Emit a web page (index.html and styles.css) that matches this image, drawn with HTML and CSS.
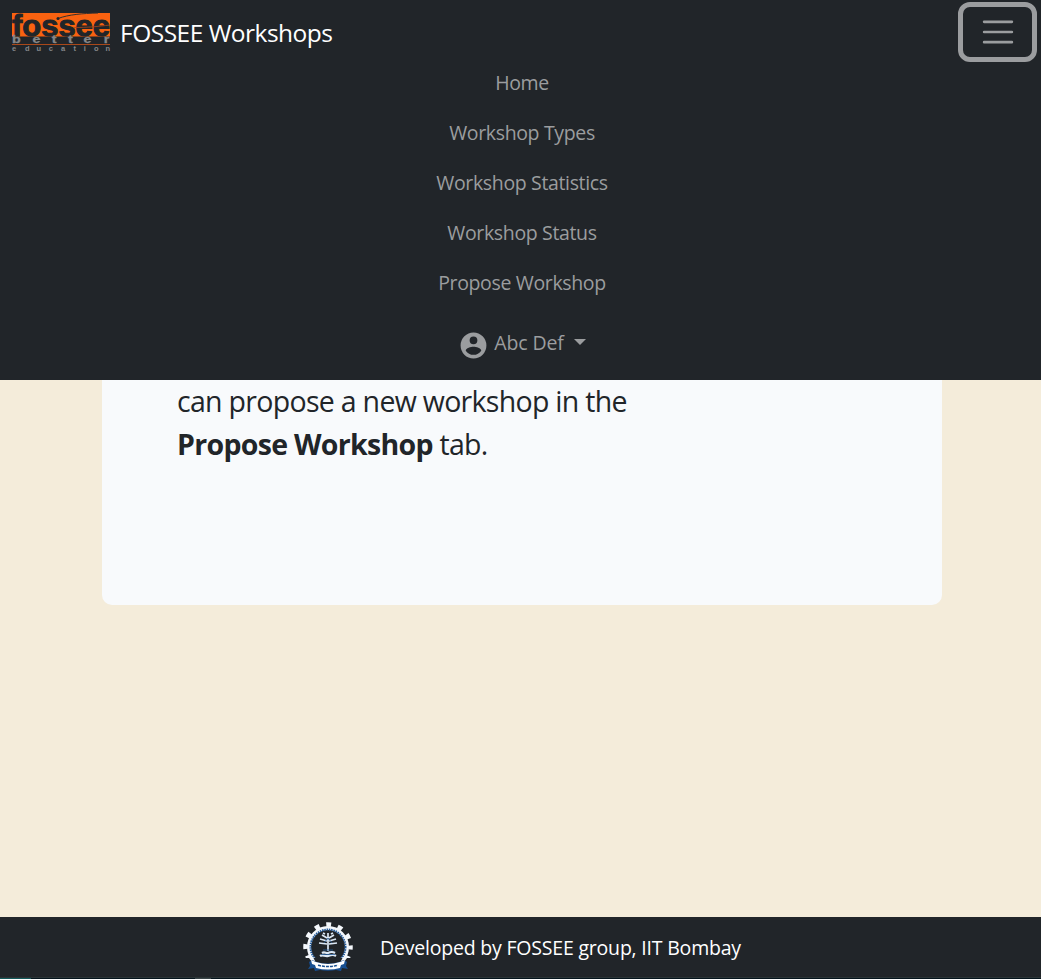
FILE: index.html
```html
<!DOCTYPE html>
<html lang="en">
<head>
<meta charset="utf-8">
<title>FOSSEE Workshops</title>
<link rel="stylesheet" href="styles.css">
</head>
<body>
<nav class="navbar">
  <div class="navbar-top">
    <a class="brand">
      <svg class="brand-logo" width="98" height="40" viewBox="0 0 98 40">
        <rect width="98" height="23.500" fill="#f96210"/>
        <g font-family="Liberation Sans, Arial, sans-serif" font-weight="bold">
          <text x="0" y="22.500" font-size="30" textLength="98" lengthAdjust="spacingAndGlyphs" fill="#212529" stroke="#212529" stroke-width="1">fossee</text>
          <text transform="scale(1.3 1)" font-size="11" y="30" x="0 15.800 30.500 43 55 70.500" fill="#85878a" stroke="#85878a" stroke-width=".3">better</text>
          <text font-size="7.500" y="38" x="0 13 24.500 36.700 49 61.500 71.700 82 93.500" fill="#85878a">education</text>
        </g>
        <path d="M46 5.500C57 1.500 70 .5 86 0" fill="none" stroke="#34302d"/>
        <path d="M62 14.500C76 14.500 86 13.500 98 12" fill="none" stroke="#a9481a" stroke-width=".8"/>
        <circle cx="46" cy="5.500" r="1.500" fill="#212529"/>
        <path d="M0 31.500h98" stroke="#a9481a"/>
      </svg>
      <span class="brand-name">FOSSEE Workshops</span>
    </a>
    <button class="toggler" aria-label="Toggle navigation">
      <svg width="38" height="38" viewBox="0 0 30 30"><path stroke="#9b9d9f" stroke-linecap="round" stroke-width="2" d="M4 7h22M4 15h22M4 23h22"/></svg>
    </button>
  </div>
  <ul class="menu">
    <li><a class="link home">Home</a></li>
    <li><a class="link types">Workshop Types</a></li>
    <li><a class="link statistics">Workshop Statistics</a></li>
    <li><a class="link status">Workshop Status</a></li>
    <li><a class="link propose">Propose Workshop</a></li>
    <li class="profile">
      <svg width="31" height="31" viewBox="0 0 24 24" fill="#9b9d9f"><path fill-rule="evenodd" d="M12 2a10 10 0 1 0 0 20 10 10 0 0 0 0-20Zm0 3a3 3 0 1 1 0 6 3 3 0 0 1 0-6Zm0 14.200a7.200 7.200 0 0 1-6-3.220c.03-1.990 4-3.080 6-3.080s5.970 1.090 6 3.080a7.200 7.200 0 0 1-6 3.220Z"/></svg>
      <a class="link user">Abc Def</a><span class="caret"></span>
    </li>
  </ul>
</nav>
<main class="page">
  <section class="card">
    <p class="message">can propose a new workshop in the<br><b>Propose Workshop</b> tab.</p>
  </section>
</main>
<footer class="footer">
  <svg class="crest" width="52" height="52" viewBox="0 0 52 52">
    <circle cx="26" cy="26" r="22.500" fill="none" stroke="#f4f8fc" stroke-width="4.500" stroke-dasharray="5 6.781" stroke-dashoffset="2.500"/>
    <circle cx="26" cy="26" r="19" fill="#212529" stroke="#f4f8fc" stroke-width="4"/>
    <circle cx="26" cy="26" r="17.500" fill="none" stroke="#245a98" stroke-width="2" stroke-dasharray="1.500 .8"/>
    <path d="M3 37h46v15H3z" fill="#212529"/>
    <path d="M7 37l4-1 2 4-3 1zM45 37l-4-1-2 4 3 1z" fill="#f4f8fc"/>
    <g fill="none" stroke="#dce8f5" stroke-width="1.700">
      <path d="M26 30V12M25 17l-5-3M27 17l5-3M25 20l-7-2M27 20l7-2M25 23l-8-1M27 23l8-1M23 13l-2-1M29 13l2-1"/>
      <path d="M20 32c3-2 4 1 6 0s4-2 7 0M18 35c3-2 5 1 8 0s5-2 8 0" stroke-width="2.200"/>
    </g>
    <path d="M22 22l4-5 4 5M21 29h10M19 33.500h14" fill="none" stroke="#245a98" stroke-width=".8"/>
    <path d="M10 39l5 2c8 2 14 2 22 0l5-2 3 2-1 4 2 3-6-1-1 3-5-1c-5 1-11 1-16 0l-5 1-1-3-6 1 2-3-1-4z" fill="#174f91"/>
    <path d="M9 39l5 2c8 2.500 16 2.500 24 0l5-2-1 4-3 1-1 3c-8 2-16 2-24 0l-1-3-3-1z" fill="#fff"/>
    <path d="M16 44.300q10 2.500 20 0" fill="none" stroke="#174f91" stroke-width="1.500" stroke-dasharray="3 1"/>
  </svg>
  <span class="credit">Developed by FOSSEE group, IIT Bombay</span>
</footer>
<div class="bottom-edge"></div>
</body>
</html>
```
FILE: styles.css
```css
* { box-sizing: border-box; }
body {
  margin: 0;
  height: 979px;
  display: flex;
  flex-direction: column;
  overflow: hidden;
  background: #f4ecda;
  color: #212529;
  font-family: "Open Sans", "Noto Sans", sans-serif;
}
.navbar { height: 380px; background: #212529; flex: none; }
.navbar-top {
  height: 58px;
  display: flex;
  justify-content: space-between;
  padding: 2px 4px 0 12px;
}
.brand { display: flex; align-items: flex-start; gap: 10px; padding-top: 11px; }
.brand-logo { overflow: visible; }
.brand-name {
  color: #fff;
  font-size: 24.500px;
  line-height: 36px;
  margin-top: 2px;
  white-space: nowrap;
  letter-spacing: -.5px;
}
.toggler {
  width: 79px;
  height: 60px;
  display: flex;
  align-items: center;
  justify-content: center;
  padding: 0;
  border: 5px solid #9b9d9f;
  border-radius: 12px;
  background: none;
}
.menu {
  list-style: none;
  margin: 0;
  padding: 0 0 0 3px;
  display: flex;
  flex-direction: column;
  align-items: center;
}
.menu li { height: 50px; line-height: 50px; display: flex; align-items: center; }
.link { color: #9b9d9f; font-size: 19.500px; letter-spacing: -.35px; white-space: nowrap; }
.menu .profile { height: 70px; }
.profile svg { margin: 4px 5px 0 0; }
.profile .user { letter-spacing: -.1px; }
.caret {
  margin: -2px 0 0 10px;
  border: 6px solid transparent;
  border-top-color: #9b9d9f;
  border-bottom: 0;
}
.page { height: 537px; padding: 0 99px 0 102px; flex: none; }
.card {
  display: flow-root;
  height: 225px;
  border-radius: 0 0 10px 10px;
  background: #f8fafc;
  padding-left: 75px;
}
.message {
  margin: 0;
  font-size: 28.500px;
  line-height: 43px;
  letter-spacing: -.7px;
  white-space: nowrap;
}
.footer {
  height: 60px;
  flex: none;
  display: flex;
  align-items: center;
  padding-left: 302px;
  gap: 26px;
  background: #212529;
}
.credit { color: #fff; font-size: 19.500px; letter-spacing: -.2px; white-space: nowrap; }
.bottom-edge {
  height: 2px;
  border-top: 1px solid #2b3436;
  background: linear-gradient(90deg, #13595a 31px, #06151d 31px 195px, #394447 195px 211px, #06151d 211px);
}
```
